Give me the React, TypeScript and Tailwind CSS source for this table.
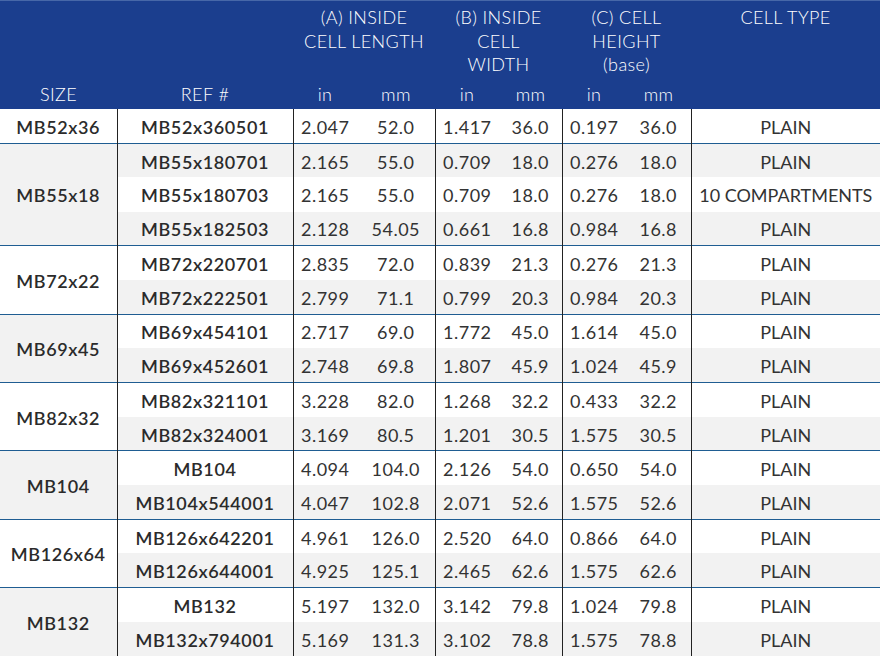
const groups = [
  {
    size: "MB52x36",
    rows: [["MB52x360501", "2.047", "52.0", "1.417", "36.0", "0.197", "36.0", "PLAIN"]],
  },
  {
    size: "MB55x18",
    rows: [
      ["MB55x180701", "2.165", "55.0", "0.709", "18.0", "0.276", "18.0", "PLAIN"],
      ["MB55x180703", "2.165", "55.0", "0.709", "18.0", "0.276", "18.0", "10 COMPARTMENTS"],
      ["MB55x182503", "2.128", "54.05", "0.661", "16.8", "0.984", "16.8", "PLAIN"],
    ],
  },
  {
    size: "MB72x22",
    rows: [
      ["MB72x220701", "2.835", "72.0", "0.839", "21.3", "0.276", "21.3", "PLAIN"],
      ["MB72x222501", "2.799", "71.1", "0.799", "20.3", "0.984", "20.3", "PLAIN"],
    ],
  },
  {
    size: "MB69x45",
    rows: [
      ["MB69x454101", "2.717", "69.0", "1.772", "45.0", "1.614", "45.0", "PLAIN"],
      ["MB69x452601", "2.748", "69.8", "1.807", "45.9", "1.024", "45.9", "PLAIN"],
    ],
  },
  {
    size: "MB82x32",
    rows: [
      ["MB82x321101", "3.228", "82.0", "1.268", "32.2", "0.433", "32.2", "PLAIN"],
      ["MB82x324001", "3.169", "80.5", "1.201", "30.5", "1.575", "30.5", "PLAIN"],
    ],
  },
  {
    size: "MB104",
    rows: [
      ["MB104", "4.094", "104.0", "2.126", "54.0", "0.650", "54.0", "PLAIN"],
      ["MB104x544001", "4.047", "102.8", "2.071", "52.6", "1.575", "52.6", "PLAIN"],
    ],
  },
  {
    size: "MB126x64",
    rows: [
      ["MB126x642201", "4.961", "126.0", "2.520", "64.0", "0.866", "64.0", "PLAIN"],
      ["MB126x644001", "4.925", "125.1", "2.465", "62.6", "1.575", "62.6", "PLAIN"],
    ],
  },
  {
    size: "MB132",
    rows: [
      ["MB132", "5.197", "132.0", "3.142", "79.8", "1.024", "79.8", "PLAIN"],
      ["MB132x794001", "5.169", "131.3", "3.102", "78.8", "1.575", "78.8", "PLAIN"],
    ],
  },
];

export default function App() {
  let rowIndex = 0;
  const num = "text-center pt-[3px] tracking-[0.5px] text-[#333]";
  const numEnd = num + " border-r border-[#222]";
  return (
    <div className="w-[880px] h-[656px] overflow-hidden bg-white font-['Lato',sans-serif] text-[#2b2b2b]">
      <table className="w-[880px] table-fixed border-collapse">
        <colgroup>
          <col className="w-[117px]" />
          <col className="w-[176px]" />
          <col className="w-[64px]" />
          <col className="w-[78px]" />
          <col className="w-[64px]" />
          <col className="w-[63px]" />
          <col className="w-[64px]" />
          <col className="w-[65px]" />
          <col className="w-[189px]" />
        </colgroup>
        <thead className="bg-[#1b3e8e] text-white font-light text-[18px] leading-[23.5px] tracking-[0.4px]">
          <tr className="h-[82px] border-t border-[#4767a8]">
            <th rowSpan={2} className="align-bottom pb-[3px] font-light">SIZE</th>
            <th rowSpan={2} className="align-bottom pb-[3px] font-light">REF #</th>
            <th colSpan={2} className="align-top pt-[5px] font-light">(A) INSIDE<br />CELL LENGTH</th>
            <th colSpan={2} className="align-top pt-[5px] font-light">(B) INSIDE<br />CELL<br />WIDTH</th>
            <th colSpan={2} className="align-top pt-[5px] font-light">(C) CELL<br />HEIGHT<br />(base)</th>
            <th rowSpan={2} className="align-top pt-[5px] font-light">CELL TYPE</th>
          </tr>
          <tr className="h-[25px]">
            <th className="font-light align-bottom pb-[3px]">in</th>
            <th className="font-light align-bottom pb-[3px]">mm</th>
            <th className="font-light align-bottom pb-[3px]">in</th>
            <th className="font-light align-bottom pb-[3px]">mm</th>
            <th className="font-light align-bottom pb-[3px]">in</th>
            <th className="font-light align-bottom pb-[3px]">mm</th>
          </tr>
        </thead>
        <tbody className="text-[18px]">
          {groups.map((g, gi) =>
            g.rows.map((r, ri) => {
              const bg = rowIndex++ % 2 === 0 ? "bg-white" : "bg-[#f2f2f2]";
              return (
                <tr
                  key={g.size + ri}
                  className={`h-[34.2px] ${bg} ${ri === 0 && gi > 0 ? "border-t border-[#1f5d92]" : ""}`}
                >
                  {ri === 0 && (
                    <td
                      rowSpan={g.rows.length}
                      className={`text-center pt-[3px] font-semibold tracking-[0.6px] border-r border-[#222] ${gi % 2 === 0 ? "bg-white" : "bg-[#f2f2f2]"}`}
                    >
                      {g.size}
                    </td>
                  )}
                  <td className="text-center pt-[3px] font-semibold tracking-[0.6px] border-r border-[#222]">{r[0]}</td>
                  <td className={num}>{r[1]}</td>
                  <td className={numEnd}>{r[2]}</td>
                  <td className={num}>{r[3]}</td>
                  <td className={numEnd}>{r[4]}</td>
                  <td className={num}>{r[5]}</td>
                  <td className={numEnd}>{r[6]}</td>
                  <td className="text-center pt-[3px] whitespace-nowrap text-[#333]">{r[7]}</td>
                </tr>
              );
            })
          )}
        </tbody>
      </table>
    </div>
  );
}
